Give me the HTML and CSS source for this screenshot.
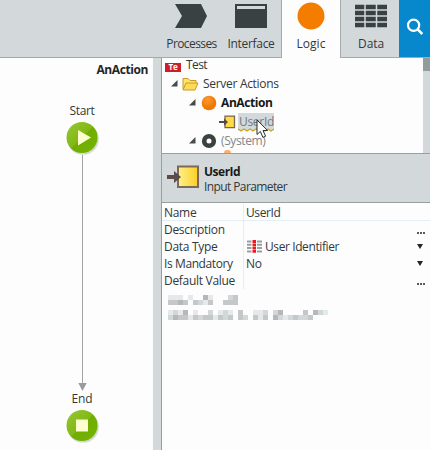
FILE: index.html
```
<!DOCTYPE html>
<html lang="en">
<head>
<meta charset="utf-8">
<title>AnAction</title>
<link rel="stylesheet" href="styles.css">
</head>
<body>
<div class="app">
  <header class="toolbar">
    <div class="spacer"></div>
    <div class="tab processes"><svg width="33" height="26" viewBox="0 0 33 26"><path d="M0 1h26l6 12-6 12H0l7-12z" fill="#394240"/></svg><span>Processes</span></div>
    <div class="tab interface"><svg width="33" height="26" viewBox="0 0 33 26"><path d="M0 1h32v24H0z" fill="#394240"/><path d="M2 3h28v3H2z" fill="#d3d8db"/></svg><span>Interface</span></div>
    <div class="tab logic"><svg width="28" height="28" viewBox="0 0 28 28"><circle cx="14" cy="14" r="13.5" fill="#f47d00"/></svg><span>Logic</span></div>
    <div class="tab data"><svg width="33" height="26" viewBox="0 0 33 26"><path d="M0 4h32M0 10h32M0 16h32M0 22h32" stroke="#394240" stroke-width="4.4"/><path d="M10 0v26M21.5 0v26" stroke="#d3d8db" stroke-width="1.5"/></svg><span>Data</span></div>
    <div class="search"><svg width="18" height="18" viewBox="0 0 18 18"><circle cx="7.6" cy="7.2" r="5.6" fill="none" stroke="#fff" stroke-width="2.2"/><path d="M11.7 11.4l4.6 4.6" stroke="#fff" stroke-width="2.5"/></svg></div>
  </header>
  <main class="work">
    <section class="canvas">
      <h1><span>AnAction</span></h1>
      <div class="flow">
        <span class="label start">Start</span>
        <svg class="node" width="36" height="36" viewBox="0 0 36 36"><defs><linearGradient id="g" x2="1" y2="1"><stop stop-color="#98c832"/><stop offset=".5" stop-color="#80b815"/><stop offset=".51" stop-color="#70ad00"/><stop offset="1" stop-color="#75b500"/></linearGradient></defs><circle cx="19" cy="19" r="15.8" fill="#d5d9d5"/><circle cx="18" cy="17.5" r="15.5" fill="url(#g)"/><path d="M14 10l13 7.5-13 8z" fill="#fdffd0"/></svg>
        <svg class="arrow" width="12" height="236" viewBox="0 0 12 236"><path d="M6.5 0v230" stroke="#a1a4a5"/><path d="M2.3 228h8.4l-4.2 8z" fill="#999d9f"/></svg>
        <span class="label end">End</span>
        <svg class="node" width="36" height="36" viewBox="0 0 36 36"><circle cx="19" cy="19" r="15.8" fill="#d5d9d5"/><circle cx="18" cy="17.5" r="15.5" fill="url(#g)"/><path d="M12 11.5h12v12H12z" fill="#fdffd0"/></svg>
      </div>
    </section>
    <div class="splitter"></div>
    <aside class="side">
      <div class="tree">
        <div class="nodes">
          <div class="row test"><i class="module"><b>Te</b></i><span>Test</span></div>
          <div class="row actions"><svg class="twist" width="7" height="7"><path d="M6.5 0v6.5H0z" fill="#464b4c"/></svg><svg class="folder" width="17" height="14" viewBox="0 0 17 14"><path d="M1 12V1.5h5l2 2h6V6" fill="#ffe36a" stroke="#c99a24"/><path d="M1 13L4 6h12l-3 7z" fill="#ffdc58" stroke="#c99a24"/></svg><span>Server Actions</span></div>
          <div class="row action"><svg class="twist" width="7" height="7"><path d="M6.5 0v6.5H0z" fill="#464b4c"/></svg><svg class="ball" width="16" height="16"><defs><radialGradient id="o" cx=".4" cy=".3"><stop stop-color="#ff9c38"/><stop offset="1" stop-color="#f07800"/></radialGradient></defs><circle cx="8" cy="8" r="7.3" fill="url(#o)"/></svg><span>AnAction</span></div>
          <div class="row user"><svg class="param" width="17" height="14" viewBox="0 0 17 14"><path d="M6 1.2h9.5v11.5H6z" fill="#ffdc45" stroke="#796451" stroke-width="1.3"/><path d="M0 6h5V3.5L9 7l-4 3.8V8H0z" fill="#544b49"/></svg><span class="selected"><em>UserId</em><svg class="wave" width="36" height="4"><path d="M0 1l3 2 3-2 3 2 3-2 3 2 3-2 3 2 3-2 3 2 3-2 3 2 3-2" fill="none" stroke="#c9a41c" stroke-width="1.2"/></svg></span></div>
          <div class="row system"><svg class="twist" width="7" height="7"><path d="M6.5 0v6.5H0z" fill="#464b4c"/></svg><svg class="ball" width="16" height="16"><circle cx="8" cy="8" r="4.8" fill="#fff" stroke="#394240" stroke-width="4.6"/></svg><span>(System)</span></div>
          <div class="next"></div>
        </div>
        <div class="scroll"><i></i></div>
        <svg class="cursor" width="13" height="20" viewBox="0 0 13 20"><path d="M1 1v14.5l3.3-3.1 2.6 6 2.7-1.2-2.6-5.7h4.6z" fill="#fff" stroke="#292d2d"/></svg>
      </div>
      <div class="heading">
        <svg width="33" height="24" viewBox="0 0 33 24"><defs><linearGradient id="y"><stop stop-color="#fff08a"/><stop offset="1" stop-color="#fbd026"/></linearGradient></defs><path d="M11 1.5h20v20.5H11z" fill="url(#y)" stroke="#7d6859" stroke-width="2"/><path d="M0 10h7V6l7 6-7 6v-4H0z" fill="#5b4b49"/></svg>
        <div class="titles"><strong>UserId</strong><span class="subtitle">Input Parameter</span></div>
      </div>
      <div class="properties">
        <div class="prop first"><span class="key">Name</span><span class="value"><span>UserId</span></span></div>
        <div class="prop"><span class="key">Description</span><span class="value"></span><svg class="dots" width="8" height="2"><path d="M0 0h2v2H0zM3 0h2v2H3zM6 0h2v2H6z" fill="#565b5c"/></svg></div>
        <div class="prop"><span class="key">Data Type</span><span class="value"><svg width="15" height="13" viewBox="0 0 15 13"><path d="M0 1.5h15M0 4.8h15M0 8.1h15M0 11.4h15" stroke="#9b9e9f" stroke-width="2"/><path d="M4.5 0h5.5v13H4.5z" fill="#fff"/><path d="M5.5 1.5h3.5M5.5 4.8h3.5M5.5 8.1h3.5M5.5 11.4h3.5" stroke="#f01620" stroke-width="2.8"/></svg><span>User Identifier</span></span><b class="drop"></b></div>
        <div class="prop"><span class="key mandatory">Is Mandatory</span><span class="value"><span>No</span></span><b class="drop"></b></div>
        <div class="prop"><span class="key">Default Value</span><span class="value"></span><svg class="dots" width="8" height="2"><path d="M0 0h2v2H0zM3 0h2v2H3zM6 0h2v2H6z" fill="#565b5c"/></svg></div>
      </div>
      <svg class="mosaic" width="160" height="25" viewBox="0 0 32 5" shape-rendering="crispEdges" stroke-width="1">
        <path d="M0 .5h3M4 .5h1M8 .5h1M7 1.5h1M0 3.5h1M2 3.5h1M5 3.5h1M10 3.5h1M12 3.5h1M17 3.5h2M31 3.5h1M4 4.5h1M9 4.5h1M18 4.5h1M23 4.5h1" stroke="#e6e9e9"/>
        <path d="M12 .5h1M6 1.5h1M1 3.5h1M8 3.5h1M11 3.5h1M19 3.5h1M21 3.5h1M30 3.5h1M0 4.5h1M6 4.5h1M11 4.5h1M15 4.5h1M22 4.5h1M24 4.5h1M26 4.5h2" stroke="#d1d8da"/>
        <path d="M13 .5h1M0 1.5h2M3 1.5h1M5 1.5h1M8 1.5h1M11 1.5h3M14 3.5h1M27 3.5h1M2 4.5h2M5 4.5h1M7 4.5h2M10 4.5h1M12 4.5h1M14 4.5h1M17 4.5h1M19 4.5h1M25 4.5h1M28 4.5h1" stroke="#c5c7c8"/>
        <path d="M7 .5h1M2 1.5h1M3 3.5h1M22 3.5h1M29 3.5h1M1 4.5h1M21 4.5h1" stroke="#b5b7b8"/>
      </svg>
    </aside>
  </main>
</div>
</body>
</html>
```
FILE: styles.css
```
*{box-sizing:border-box}
body{margin:0;background:#fdfdfd;color:#333839;font:12px/17px "Open Sans","Noto Sans",sans-serif;letter-spacing:-.3px}
.app{width:430px;height:450px;overflow:hidden;display:flex;flex-direction:column}
svg{display:block;flex:none}

.toolbar{height:58px;display:flex;flex:none;background:#d3d8db}
.spacer{width:162px;border-bottom:1px solid #a4a9ab}
.tab{display:flex;flex-direction:column;align-items:center;border-bottom:1px solid #a4a9ab;padding-top:3px}
.tab span{margin-top:6px;white-space:nowrap}
.processes{width:59px}
.processes span{letter-spacing:-.6px}
.interface{width:61px;border-right:1px solid #a4a9ab}
.logic{width:58px;background:#fdfdfd;border-bottom:0;letter-spacing:0}
.logic svg{margin-top:-1px}
.logic span{margin-top:5px}
.data{width:59px;border-left:1px solid #a4a9ab;padding-left:2px;letter-spacing:-.1px}
.search{width:31px;background:#0788cc;border-bottom:1px solid #a4a9ab;padding:18px 0 0 7px}

.work{display:flex;flex:1;min-height:0}
.canvas{width:153px;flex:none}
.splitter{width:9px;background:#d3d8db;border-right:1px solid #999ea0;flex:none}
h1{font-size:12px;line-height:17px;margin:3px 5px 0 0;text-align:right;color:#242728;letter-spacing:-.4px}
.flow{width:36px;margin:24px 0 0 64px;display:flex;flex-direction:column;align-items:center}
.label{white-space:nowrap}
.end{letter-spacing:-.1px;margin-top:-1px}
.flow .node{margin-top:1px}
.arrow{margin-top:-1px}

.side{width:268px;flex:none}
.tree{height:96px;overflow:hidden;position:relative;display:flex;border-bottom:1px solid #999ea0}
.nodes{width:261px;margin-top:-3px}
.row{height:19px;display:flex;align-items:center;white-space:nowrap}
.module{width:16px;height:9px;margin:5px 5px 0 3px;background:#cc2029;color:#fff;overflow:hidden;font-style:normal}
.module b{display:block;font-size:8px;line-height:7px;text-align:center}
.test span{letter-spacing:-.6px}
.actions{padding-left:9px}
.folder{margin:0 4px}
.action,.system{padding-left:27px}
.ball{margin:0 4px 0 5px}
.action span{font-weight:700;color:#151919;letter-spacing:-.4px}
.user{padding-left:57px}
.selected{position:relative;background:#d3d8db;width:36px;height:17px;margin-left:2px;padding-left:1px;color:#747a7b}
.selected em{font-style:normal}
.wave{position:absolute;left:0;bottom:-2px}
.system span{color:#828687;letter-spacing:-.4px}
.next{width:7px;height:3px;background:#f9b06a;border-radius:4px 4px 0 0;margin-left:62px}
.scroll{width:7px;background:#d3d8db}
.scroll i{display:block;height:13px;background:#929b9d}
.cursor{position:absolute;left:94px;top:61px}

.heading{height:49px;background:#d3d8db;border-bottom:1px solid #999ea0;display:flex;padding:10px 0 0 5px}
.heading svg{margin-top:1px}
.titles{display:flex;flex-direction:column;line-height:15px;margin:0 0 0 4px}
.titles strong{color:#171b1b;letter-spacing:-.5px}
.subtitle{letter-spacing:-.6px}

.properties{padding-top:1px}
.prop{height:17px;display:flex;align-items:center}
.first{border-bottom:1px solid #e4eff4}
.key{width:82px;padding-left:2px;border-right:1px solid #e4eff4}
.mandatory{letter-spacing:-.4px}
.value{display:flex;align-items:center;padding-left:2px;gap:3px;flex:1;letter-spacing:-.4px}
.value svg{margin-left:1px}
.drop{width:0;border:3px solid transparent;border-top:5px solid #202526;border-bottom:0;margin-right:7px}
.dots{margin:6px 5px 0 0}
.mosaic{margin:6px 0 0 6px}
```
